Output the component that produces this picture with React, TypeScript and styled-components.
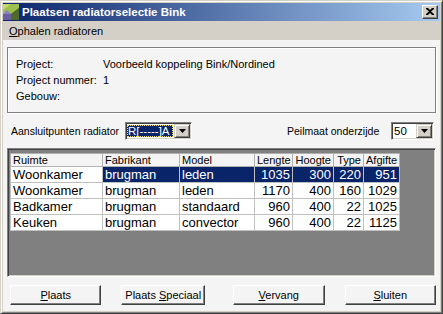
import React from 'react';
import styled, { createGlobalStyle } from 'styled-components';

const GlobalStyle = createGlobalStyle`
  body {
    margin: 0;
    font-family: "Liberation Sans", Arial, sans-serif;
  }
`;

const rows = [
  { ruimte: 'Woonkamer', fabrikant: 'brugman', model: 'leden', lengte: 1035, hoogte: 300, type: 220, afgifte: 951 },
  { ruimte: 'Woonkamer', fabrikant: 'brugman', model: 'leden', lengte: 1170, hoogte: 400, type: 160, afgifte: 1029 },
  { ruimte: 'Badkamer', fabrikant: 'brugman', model: 'standaard', lengte: 960, hoogte: 400, type: 22, afgifte: 1025 },
  { ruimte: 'Keuken', fabrikant: 'brugman', model: 'convector', lengte: 960, hoogte: 400, type: 22, afgifte: 1125 },
];

const columns = [
  { key: 'ruimte', label: 'Ruimte', width: 92, num: false },
  { key: 'fabrikant', label: 'Fabrikant', width: 77, num: false },
  { key: 'model', label: 'Model', width: 75, num: false },
  { key: 'lengte', label: 'Lengte', width: 38, num: true },
  { key: 'hoogte', label: 'Hoogte', width: 41, num: true },
  { key: 'type', label: 'Type', width: 30, num: true },
  { key: 'afgifte', label: 'Afgifte', width: 36, num: true },
] as const;

const AppIcon = () => (
  <svg width="16" height="16" viewBox="0 0 16 16">
    <rect width="16" height="16" fill="#5d7a34" />
    <polygon points="0,0 16,0 16,4 8,10 0,10" fill="#9dbf50" />
    <polygon points="0,0 8,0 0,6" fill="#c3d96c" />
    <polygon points="0,10 8,10 8,16 0,16" fill="#6a5fa0" />
    <polygon points="0,10 4,6 8,10" fill="#8b80c0" />
    <polygon points="8,10 16,4 16,16 8,16" fill="#4f6a2c" />
  </svg>
);

const CloseGlyph = () => (
  <svg width="8" height="7" viewBox="0 0 8 7">
    <path d="M0 0h2l2 2 2-2h2v1l-3 2.5 3 2.5v1h-2l-2-2-2 2h-2v-1l3-2.5-3-2.5z" fill="#000" />
  </svg>
);

const ArrowGlyph = () => (
  <svg width="7" height="4" viewBox="0 0 7 4">
    <path d="M0 0h7l-3.5 4z" fill="#000" />
  </svg>
);

const Combo = ({ value, width, focused }: { value: string; width: number; focused?: boolean }) => (
  <ComboBox style={{ width }}>
    <ComboText $focused={focused}>{value}</ComboText>
    <DropButton>
      <ArrowGlyph />
    </DropButton>
  </ComboBox>
);

const App = () => {
  return (
    <>
      <GlobalStyle />
      <Window>
        <TitleBar>
          <AppIcon />
          <Title>Plaatsen radiatorselectie Bink</Title>
          <CloseButton>
            <CloseGlyph />
          </CloseButton>
        </TitleBar>
        <MenuBar>
          <MenuItem>
            <u>O</u>phalen radiatoren
          </MenuItem>
        </MenuBar>
        <Content>
          <InfoBox>
            <InfoRow>
              <InfoLabel>Project:</InfoLabel>
              <span>Voorbeeld koppeling Bink/Nordined</span>
            </InfoRow>
            <InfoRow>
              <InfoLabel>Project nummer:</InfoLabel>
              <span>1</span>
            </InfoRow>
            <InfoRow>
              <InfoLabel>Gebouw:</InfoLabel>
            </InfoRow>
          </InfoBox>

          <OptionsRow>
            <OptionGroup>
              <OptionLabel $width={114}>Aansluitpunten radiator</OptionLabel>
              <Combo value="R[-----]A" width={67} focused />
            </OptionGroup>
            <OptionGroup>
              <OptionLabel $width={104}>Peilmaat onderzijde</OptionLabel>
              <Combo value="50" width={43} />
            </OptionGroup>
          </OptionsRow>

          <GridArea>
            <Grid>
              <colgroup>
                {columns.map((c) => (
                  <col key={c.key} style={{ width: c.width }} />
                ))}
              </colgroup>
              <thead>
                <tr>
                  {columns.map((c) => (
                    <HeadCell key={c.key} $num={c.num}>
                      {c.label}
                    </HeadCell>
                  ))}
                </tr>
              </thead>
              <tbody>
                {rows.map((r, i) => (
                  <tr key={i}>
                    {columns.map((c, j) => (
                      <Cell key={c.key} $num={c.num} $selected={i === 0 && j > 0}>
                        {r[c.key]}
                      </Cell>
                    ))}
                  </tr>
                ))}
              </tbody>
            </Grid>
          </GridArea>

          <ButtonRow>
            <Button $width={92} $offset={0}>
              <u>P</u>laats
            </Button>
            <Button $width={84} $offset={20}>
              Plaats <u>S</u>peciaal
            </Button>
            <Button $width={92} $offset={28}>
              <u>V</u>ervang
            </Button>
            <Button $width={92} $offset={20}>
              <u>S</u>luiten
            </Button>
          </ButtonRow>
        </Content>
      </Window>
    </>
  );
};

export default App;

const Window = styled.div`
  width: 443px;
  height: 314px;
  box-sizing: border-box;
  display: flex;
  flex-direction: column;
  padding: 2px;
  background: #d4d0c8;
  border: 1px solid;
  border-color: #d4d0c8 #404040 #404040 #d4d0c8;
  box-shadow: inset 1px 1px #ffffff, inset -1px -1px #808080;
  font-size: 11px;
  color: #000;
  white-space: nowrap;
`;

const TitleBar = styled.div`
  height: 18px;
  display: flex;
  align-items: center;
  padding: 0 2px 0 0;
  background: linear-gradient(to right, #0a246a, #a6caf0);
  gap: 3px;
`;

const Title = styled.div`
  flex: 1;
  color: #fff;
  font-weight: bold;
  font-size: 11.5px;
`;

const CloseButton = styled.div`
  width: 16px;
  height: 14px;
  box-sizing: border-box;
  display: flex;
  align-items: center;
  justify-content: center;
  background: #d4d0c8;
  border: 1px solid;
  border-color: #ffffff #404040 #404040 #ffffff;
  box-shadow: inset -1px -1px #808080;
  padding-bottom: 1px;
`;

const MenuBar = styled.div`
  height: 19px;
  display: flex;
  align-items: center;
  background: #d4d0c8;
`;

const MenuItem = styled.div`
  padding: 0 6px;
  font-size: 11px;
`;

const Content = styled.div`
  flex: 1;
  display: flex;
  flex-direction: column;
  padding: 7px 4px 0 4px;
  background: #f4f4f4;
`;

const InfoBox = styled.div`
  height: 66px;
  box-sizing: border-box;
  padding: 8px 8px 0 8px;
  border: 1px solid #808080;
  box-shadow: inset 1px 1px #ffffff, 1px 1px #ffffff;
  font-size: 11px;
`;

const InfoRow = styled.div`
  display: flex;
  height: 16px;
  align-items: center;
`;

const InfoLabel = styled.span`
  width: 87px;
`;

const OptionsRow = styled.div`
  display: flex;
  justify-content: space-between;
  align-items: center;
  margin-top: 9px;
  padding: 0 2px 0 4px;
  height: 17px;
  font-size: 10.5px;
`;

const OptionGroup = styled.div`
  display: flex;
  align-items: center;
`;

const OptionLabel = styled.span<{ $width: number }>`
  width: ${(p) => p.$width}px;
`;

const ComboBox = styled.div`
  height: 18px;
  box-sizing: border-box;
  display: flex;
  align-items: stretch;
  background: #fff;
  border: 1px solid;
  border-color: #808080 #ffffff #ffffff #808080;
  box-shadow: inset 1px 1px #404040, inset -1px -1px #d4d0c8;
  padding: 2px 2px 2px 1px;
`;

const ComboText = styled.div<{ $focused?: boolean }>`
  flex: 1;
  min-width: 0;
  overflow: hidden;
  display: flex;
  align-items: center;
  padding-left: 1px;
  margin-right: 1px;
  font-size: 11.5px;
  background: ${(p) => (p.$focused ? '#0a246a' : '#fff')};
  color: ${(p) => (p.$focused ? '#fff' : '#000')};
  outline: ${(p) => (p.$focused ? '1px dotted #f0e060' : 'none')};
  outline-offset: -1px;
`;

const DropButton = styled.div`
  width: 16px;
  flex-shrink: 0;
  margin: -1px -1px -1px 0;
  box-sizing: border-box;
  display: flex;
  align-items: center;
  justify-content: center;
  background: #d4d0c8;
  border: 1px solid;
  border-color: #d4d0c8 #404040 #404040 #d4d0c8;
  box-shadow: inset 1px 1px #ffffff, inset -1px -1px #808080;
`;

const GridArea = styled.div`
  height: 129px;
  box-sizing: border-box;
  margin-top: 9px;
  padding: 4px 2px;
  background: #808080;
  border: 1px solid;
  border-color: #808080 #ffffff #ffffff #808080;
  box-shadow: inset 1px 1px #404040, inset -1px -1px #d4d0c8;
`;

const Grid = styled.table`
  border-collapse: collapse;
  table-layout: fixed;
  width: 390px;
  background: #fff;
  border: 1px solid #000;
`;

const HeadCell = styled.th<{ $num: boolean }>`
  height: 12px;
  padding: 0 2px;
  font-size: 11px;
  font-weight: normal;
  text-align: ${(p) => (p.$num ? 'right' : 'left')};
  background: #f4f4f4;
  border: 1px solid #b0b0b0;
  line-height: 12px;
  overflow: hidden;
`;

const Cell = styled.td<{ $num: boolean; $selected: boolean }>`
  height: 15px;
  padding: 0 2px;
  font-size: 13px;
  line-height: 15px;
  text-align: ${(p) => (p.$num ? 'right' : 'left')};
  background: ${(p) => (p.$selected ? '#0a246a' : '#fff')};
  color: ${(p) => (p.$selected ? '#fff' : '#000')};
  border: 1px solid #c0c0c0;
  overflow: hidden;
`;

const ButtonRow = styled.div`
  display: flex;
  margin-top: 8px;
  padding-left: 3px;
`;

const Button = styled.button<{ $width: number; $offset: number }>`
  width: ${(p) => p.$width}px;
  height: 20px;
  margin-left: ${(p) => p.$offset}px;
  padding: 0;
  font-family: "Liberation Sans", Arial, sans-serif;
  font-size: 11px;
  white-space: nowrap;
  color: #000;
  background: #f4f4f4;
  border: 1px solid;
  border-color: #ffffff #404040 #404040 #ffffff;
  box-shadow: inset -1px -1px #808080;
`;
